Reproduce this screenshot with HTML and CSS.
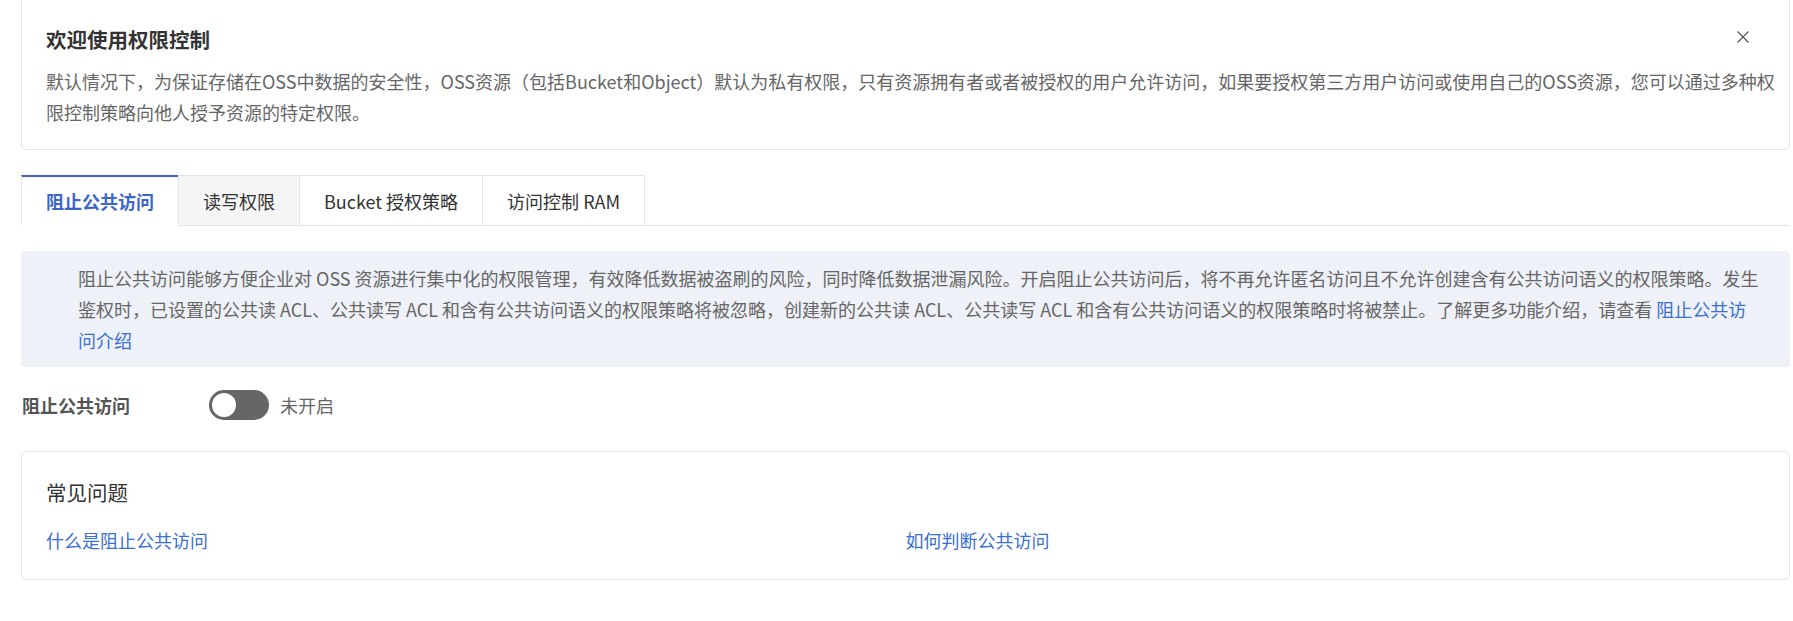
FILE: index.html
```html
<!DOCTYPE html>
<html lang="zh-CN">
<head>
<meta charset="utf-8">
<title>权限控制</title>
<link rel="stylesheet" href="styles.css">
</head>
<body>
<div class="page">
  <section class="welcome">
    <h2 class="welcome-title">欢迎使用权限控制</h2>
    <p class="welcome-text">默认情况下，为保证存储在OSS中数据的安全性，OSS资源（包括Bucket和Object）默认为私有权限，只有资源拥有者或者被授权的用户允许访问，如果要授权第三方用户访问或使用自己的OSS资源，您可以通过多种权限控制策略向他人授予资源的特定权限。</p>
    <button class="close" aria-label="关闭">
      <svg width="12" height="12" viewBox="0 0 12 12"><path d="M0.5 0.5L11.5 11.5M11.5 0.5L0.5 11.5" stroke="#555" stroke-width="1.2" fill="none"/></svg>
    </button>
  </section>

  <nav class="tabs">
    <div class="tab active">阻止公共访问</div>
    <div class="tab hover">读写权限</div>
    <div class="tab">Bucket 授权策略</div>
    <div class="tab">访问控制 RAM</div>
  </nav>

  <div class="notice">阻止公共访问能够方便企业对 OSS 资源进行集中化的权限管理，有效降低数据被盗刷的风险，同时降低数据泄漏风险。开启阻止公共访问后，将不再允许匿名访问且不允许创建含有公共访问语义的权限策略。发生鉴权时，已设置的公共读 ACL、公共读写 ACL 和含有公共访问语义的权限策略将被忽略，创建新的公共读 ACL、公共读写 ACL 和含有公共访问语义的权限策略时将被禁止。了解更多功能介绍，请查看 <a class="link" href="#">阻止公共访问介绍</a></div>

  <div class="setting">
    <div class="setting-label">阻止公共访问</div>
    <div class="switch"><span class="knob"></span></div>
    <div class="setting-state">未开启</div>
  </div>

  <section class="faq">
    <h3 class="faq-title">常见问题</h3>
    <div class="faq-links">
      <a class="link" href="#">什么是阻止公共访问</a>
      <a class="link" href="#">如何判断公共访问</a>
    </div>
  </section>
</div>
</body>
</html>
```

FILE: styles.css
```css
* { box-sizing: border-box; }
html, body { margin: 0; padding: 0; background: #fff; }
body {
  font-family: "Noto Sans CJK SC", "Microsoft YaHei", sans-serif;
  font-size: 18px;
  color: #333;
  overflow: hidden;
}
.page {
  margin-left: 21px;
  width: 1769px;
}
.welcome {
  position: relative;
  margin-top: -9px;
  border: 1px solid #e4e4e4;
  border-radius: 5px;
  padding: 32px 4px 21px 24px;
}
.welcome-title {
  margin: 0;
  font-size: 20.5px;
  line-height: 30px;
  font-weight: 700;
  color: #333;
}
.welcome-text {
  margin: 12px 0 0 0;
  font-size: 18px;
  line-height: 31px;
  color: #666;
}
.close {
  position: absolute;
  top: 39px;
  right: 40px;
  width: 12px;
  height: 12px;
  padding: 0;
  border: 0;
  background: none;
  display: block;
}
.close svg { display: block; }

.tabs {
  display: flex;
  margin-top: 25px;
  border-bottom: 1px solid #e4e4e4;
}
.tab {
  height: 51px;
  padding: 0 24px;
  border: 1px solid #e4e4e4;
  margin-left: -1px;
  margin-bottom: -1px;
  line-height: 50px;
  font-size: 18px;
  color: #333;
  background: #fff;
}
.tab:first-child { margin-left: 0; }
.tab.hover { background: #f5f5f5; }
.tab.active {
  border-top: 2px solid #3a66cc;
  border-bottom-color: #fff;
  color: #3a66cc;
  font-weight: 700;
  line-height: 48px;
}

.notice {
  margin-top: 25px;
  background: #eef1f7;
  border-radius: 3px;
  padding: 12px 30px 11px 57px;
  font-size: 18px;
  line-height: 31px;
  color: #666;
}
.link {
  color: #3a6fd4;
  text-decoration: none;
}

.setting {
  display: flex;
  align-items: center;
  margin-top: 23px;
  height: 30px;
}
.setting-label {
  width: 188px;
  padding-left: 1px;
  font-weight: 700;
  color: #555;
  font-size: 18px;
}
.switch {
  position: relative;
  width: 60px;
  height: 30px;
  border-radius: 15px;
  background: #666;
}
.knob {
  position: absolute;
  left: 3px;
  top: 3px;
  width: 24px;
  height: 24px;
  border-radius: 50%;
  background: #fff;
}
.setting-state {
  margin-left: 11px;
  color: #666;
  font-size: 18px;
}

.faq {
  margin-top: 31px;
  border: 1px solid #e4e4e4;
  border-radius: 5px;
  padding: 25px 24px 24px 24px;
}
.faq-title {
  margin: 0;
  font-size: 20.5px;
  line-height: 30px;
  font-weight: 400;
  color: #333;
}
.faq-links {
  margin-top: 18px;
  display: grid;
  grid-template-columns: 1fr 1fr;
  line-height: 30px;
  font-size: 18px;
}
```
